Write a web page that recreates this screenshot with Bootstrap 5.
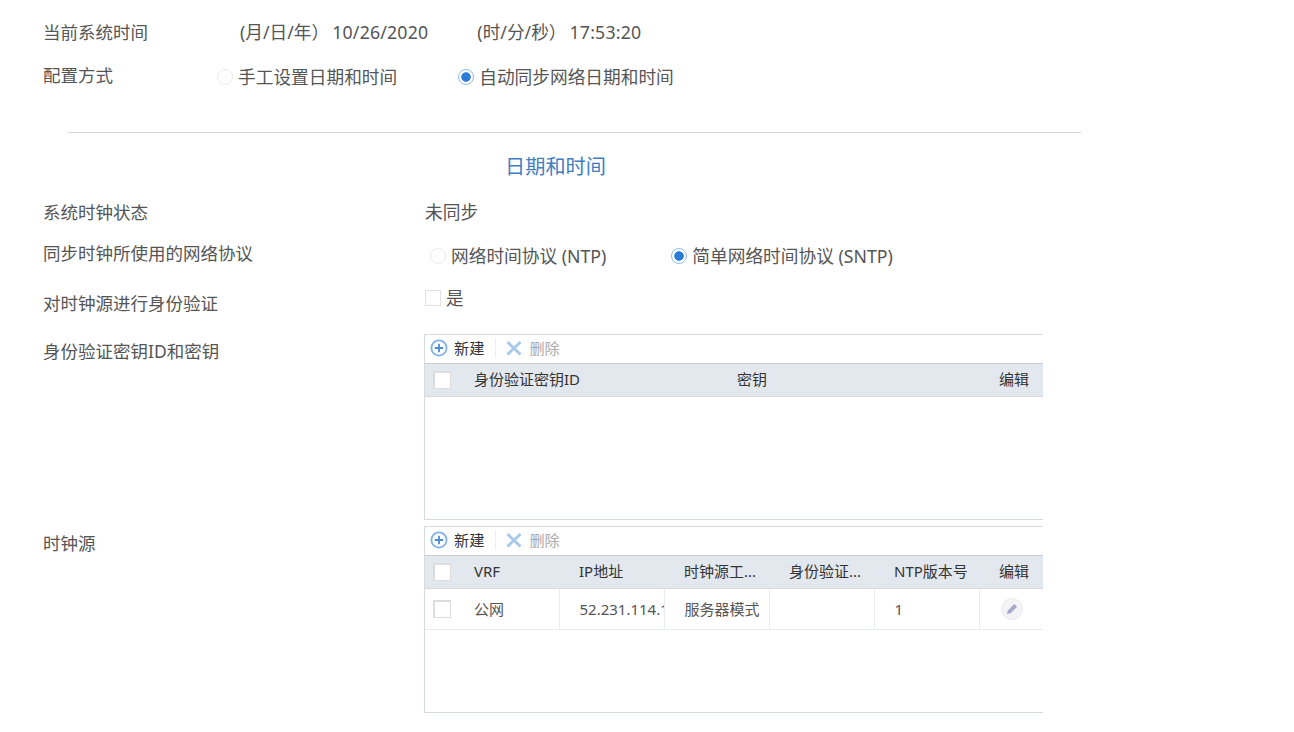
<!DOCTYPE html>
<html lang="zh-CN">
<head>
<meta charset="utf-8">
<title>日期和时间</title>
<link rel="stylesheet" href="https://cdn.jsdelivr.net/npm/bootstrap@5.3.0/dist/css/bootstrap.min.css">
<style>
html,body{height:100%;overflow:hidden}
body{background:#fff;color:#555;font-family:"Noto Sans","Noto Sans CJK SC",sans-serif;font-size:17.7px;line-height:26px;padding:19px 0 0 43px}
.row-a{height:43px}
.row-b{height:70px}
.label-top{width:197px;font-size:17.5px}
.label-mode{width:174px;font-size:17.5px}
.label-main{width:381px;flex:none;font-size:17.5px}
.gap-v{margin-top:2px;height:26px}
.date-val{margin-left:3px;letter-spacing:.2px}
.sep-time{width:49px}
.rule-line{width:1013px;height:1px;background:#d3d5d9;margin-left:25px}
.title-sec{height:66px;line-height:66px;font-size:20.2px;color:#3f7fc1;padding-left:462px}
.row-c{height:41px}
.row-d{height:45px}
.row-e{height:49px}
.row-f{height:192px}
.mt-3px{margin-top:3px;height:26px}
.mt-5px{margin-top:5px}
.mt-4px{margin-top:4px}
.opt-radio{display:flex;align-items:center;gap:5px}
.opt-radio .form-check-input{width:16px;height:16px;margin:0;flex:none;border:1px solid #eaeaea;background:#fff;box-shadow:none}
.opt-radio .form-check-input:checked{border:1.5px solid #8fbbea;background:radial-gradient(circle,#2b7bd8 0 4.4px,#fff 5px)}
.proto-group{margin-left:6px}
.gap-proto{width:65px}
.gap-mode{width:61px}
.val-shift{margin-left:1px}
.check-box.form-check-input{width:16px;height:16px;border:1px solid #e2e2e2;background:#fff;margin:0;border-radius:0;box-shadow:none}
.check-label{gap:5px;margin-left:1px}
.grid-box{width:619px;height:186px;border:1px solid #d5d9e0;border-right:0;overflow:hidden;flex:none}
.grid-box.tall{height:187px}
.tool-bar{height:28px;font-size:15.2px;line-height:26px;padding-bottom:2px;color:#333}
.tool-item{display:flex;align-items:center;gap:6px}
.tool-add{padding-left:5px}
.tool-div{width:1px;height:20px;background:#eeeff2;margin:0 9px 0 11px}
.tool-off{color:#aaa}
.grid-table{table-layout:fixed;width:659px;font-size:15px;margin:0;--bs-table-bg:transparent;color:#555}
.grid-table th,.grid-table td{padding:0 0 0 20px;font-weight:400;white-space:nowrap;overflow:hidden;border:0;color:#555;vertical-align:middle}
.grid-table .col-chk{padding:0 0 0 8px;width:29px}
.grid-table thead th{height:33px;padding-bottom:2px;background:#e3e8ef;color:#333;border-top:1px solid #c9cdd3;border-bottom:1px solid #d5d9e0}
.grid-table tbody td{height:41px;border-bottom:1px solid #e8ebef;border-right:1px solid #e8ebef}
.grid-table tbody td.col-chk{border-right:0}
.grid-table tbody td:last-child{border-right:0;padding-left:21px}
.col-w{width:105px}
.col-wide{width:263px}
.col-wide2{width:262px}
.grid-table .check-box.form-check-input{display:block;width:18px;height:18px;border:1px solid #dcdcdc;border-width:2px 1px 1px 2px}
.edit-btn{width:22px;height:22px;display:block}
</style>
</head>
<body>
<div class="d-flex row-a">
  <div class="label-top">当前系统时间</div>
  <div class="d-flex">
    <span>(月/日/年）</span><span class="date-val">10/26/2020</span><span class="sep-time"></span><span>(时/分/秒）</span><span class="date-val">17:53:20</span>
  </div>
</div>
<div class="d-flex row-b">
  <div class="label-mode">配置方式</div>
  <div class="gap-v d-flex">
    <label class="opt-radio"><input class="form-check-input" type="radio" name="m">手工设置日期和时间</label>
    <span class="gap-mode"></span>
    <label class="opt-radio"><input class="form-check-input" type="radio" name="m" checked>自动同步网络日期和时间</label>
  </div>
</div>
<div class="rule-line"></div>
<div class="title-sec">日期和时间</div>
<div class="d-flex row-c">
  <div class="label-main">系统时钟状态</div>
  <div class="val-shift">未同步</div>
</div>
<div class="d-flex row-d">
  <div class="label-main">同步时钟所使用的网络协议</div>
  <div class="mt-3px d-flex proto-group">
    <label class="opt-radio"><input class="form-check-input" type="radio" name="p">网络时间协议 (NTP)</label>
    <span class="gap-proto"></span>
    <label class="opt-radio"><input class="form-check-input" type="radio" name="p" checked>简单网络时间协议 (SNTP)</label>
  </div>
</div>
<div class="d-flex row-e">
  <div class="label-main mt-5px">对时钟源进行身份验证</div>
  <label class="d-flex align-items-center check-label align-self-start"><input class="check-box form-check-input" type="checkbox">是</label>
</div>
<div class="d-flex row-f">
  <div class="label-main mt-4px">身份验证密钥ID和密钥</div>
  <div class="grid-box">
    <div class="tool-bar d-flex align-items-center">
      <span class="tool-item tool-add">
        <svg width="18" height="18" viewBox="0 0 18 18"><circle cx="9" cy="9" r="7.6" fill="#fff" stroke="#7fb0e6" stroke-width="1.8"/><path d="M9 4.8v8.4M4.8 9h8.4" stroke="#4a8cd8" stroke-width="1.8"/></svg>
        新建</span>
      <span class="tool-div"></span>
      <span class="tool-item tool-off">
        <svg width="18" height="18" viewBox="0 0 18 18"><path d="M2.5 3l13 12.5M15.5 3l-13 12.5" stroke="#a9c9ec" stroke-width="3"/></svg>
        删除</span>
    </div>
    <table class="table grid-table">
      <thead><tr>
        <th class="col-chk"><input class="check-box form-check-input" type="checkbox"></th>
        <th class="col-wide">身份验证密钥ID</th>
        <th class="col-wide2">密钥</th>
        <th class="col-w">编辑</th>
      </tr></thead>
    </table>
  </div>
</div>
<div class="d-flex">
  <div class="label-main mt-4px">时钟源</div>
  <div class="grid-box tall">
    <div class="tool-bar d-flex align-items-center">
      <span class="tool-item tool-add">
        <svg width="18" height="18" viewBox="0 0 18 18"><circle cx="9" cy="9" r="7.6" fill="#fff" stroke="#7fb0e6" stroke-width="1.8"/><path d="M9 4.8v8.4M4.8 9h8.4" stroke="#4a8cd8" stroke-width="1.8"/></svg>
        新建</span>
      <span class="tool-div"></span>
      <span class="tool-item tool-off">
        <svg width="18" height="18" viewBox="0 0 18 18"><path d="M2.5 3l13 12.5M15.5 3l-13 12.5" stroke="#a9c9ec" stroke-width="3"/></svg>
        删除</span>
    </div>
    <table class="table grid-table">
      <thead><tr>
        <th class="col-chk"><input class="check-box form-check-input" type="checkbox"></th>
        <th class="col-w">VRF</th>
        <th class="col-w">IP地址</th>
        <th class="col-w">时钟源工...</th>
        <th class="col-w">身份验证...</th>
        <th class="col-w">NTP版本号</th>
        <th class="col-w">编辑</th>
      </tr></thead>
      <tbody><tr>
        <td class="col-chk"><input class="check-box form-check-input" type="checkbox"></td>
        <td>公网</td>
        <td>52.231.114.1</td>
        <td>服务器模式</td>
        <td></td>
        <td>1</td>
        <td><svg class="edit-btn" viewBox="0 0 24 24"><circle cx="12" cy="12" r="11.3" fill="#f3f3f8" stroke="#e6e6ee"/><path d="M6.5 17.5l1-4 7-7 3 3-7 7z" fill="#a5abc8"/></svg></td>
      </tr></tbody>
    </table>
  </div>
</div>
<script src="https://cdn.jsdelivr.net/npm/bootstrap@5.3.0/dist/js/bootstrap.bundle.min.js"></script>
</body>
</html>
